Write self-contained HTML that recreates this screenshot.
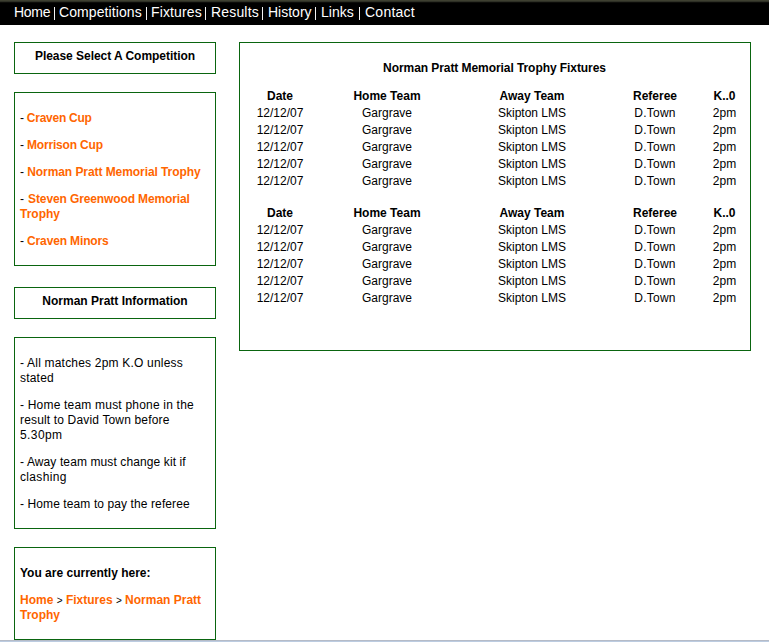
<!DOCTYPE html>
<html><head><meta charset="utf-8"><title>Norman Pratt Memorial Trophy Fixtures</title>
<style>
html,body{margin:0;padding:0}
body{width:769px;height:642px;overflow:hidden;background:#fff;position:relative;font-family:"Liberation Sans",sans-serif;color:#000}
#nav{position:absolute;left:0;top:0;width:769px;height:25px;background:#000}
#navtop{position:absolute;left:0;top:0;width:769px;height:3px;background:linear-gradient(#3e4031 0,#3e4031 1px,#2e3026 1px,#2e3026 2px,#0c0c09 2px,#0c0c09 3px)}
.pp{position:absolute;top:7px;width:1px;height:13px;background:#f4f4f4}
.n{position:absolute;top:4px;font-size:14px;line-height:16px;color:#fff;white-space:pre}
.box{position:absolute;left:14px;width:200px;border:1px solid #0a650f;background:#fff}
.hd{font-weight:bold;font-size:12px;text-align:center;position:absolute;left:0;right:0;line-height:15px}
.t{position:absolute;left:20px;font-size:12px;line-height:15px;white-space:pre}
.o{color:#ff6600;font-weight:bold}
#content{position:absolute;left:239px;top:42px;width:510px;height:307px;border:1px solid #0a650f}
.c{position:absolute;width:100px;text-align:center;font-size:12px;line-height:15px;white-space:pre}
.b{font-weight:bold}
.gt{font-size:10px}
.ls{letter-spacing:0.2px}
#bottom{position:absolute;left:0;top:640px;width:769px;height:2px;background:linear-gradient(#b5bbc7 0,#b5bbc7 1px,#bccce1 1px,#bccce1 2px)}
</style></head><body>
<div id="nav"><div id="navtop"></div>
<span class="n" style="left:14px;letter-spacing:-0.3px">Home</span>
<span class="pp" style="left:54px"></span>
<span class="n" style="left:59px;letter-spacing:0.09px">Competitions</span>
<span class="pp" style="left:146px"></span>
<span class="n" style="left:151px;letter-spacing:0.14px">Fixtures</span>
<span class="pp" style="left:205px"></span>
<span class="n" style="left:211px;letter-spacing:0.17px">Results</span>
<span class="pp" style="left:262px"></span>
<span class="n" style="left:268px">History</span>
<span class="pp" style="left:315px"></span>
<span class="n" style="left:321px">Links</span>
<span class="pp" style="left:359px"></span>
<span class="n" style="left:365px;letter-spacing:0.25px">Contact</span>
</div>

<div class="box" style="top:42px;height:30px"></div>
<div class="hd" style="position:absolute;left:14px;width:202px;top:49px;letter-spacing:-0.04px">Please Select A Competition</div>

<div class="box" style="top:92px;height:172px"></div>
<div class="t" style="top:111px;letter-spacing:-0.25px">- <span class="o">Craven Cup</span></div>
<div class="t" style="top:138px;letter-spacing:-0.18px">- <span class="o">Morrison Cup</span></div>
<div class="t" style="top:165px;letter-spacing:-0.07px">- <span class="o">Norman Pratt Memorial Trophy</span></div>
<div class="t" style="top:192px;letter-spacing:-0.12px">- <span class="o" style="margin-left:1px">Steven Greenwood Memorial</span></div>
<div class="t" style="top:207px"><span class="o">Trophy</span></div>
<div class="t" style="top:234px;letter-spacing:-0.14px">- <span class="o">Craven Minors</span></div>

<div class="box" style="top:287px;height:30px"></div>
<div class="hd" style="position:absolute;left:14px;width:202px;top:294px">Norman Pratt Information</div>

<div class="box" style="top:337px;height:190px"></div>
<div class="t ls" style="top:356px">- All matches 2pm K.O unless</div>
<div class="t ls" style="top:371px">stated</div>
<div class="t ls" style="top:398px">- Home team must phone in the</div>
<div class="t" style="top:413px;letter-spacing:0.16px">result to David Town before</div>
<div class="t" style="top:428px;letter-spacing:0.4px">5.30pm</div>
<div class="t" style="top:455px;letter-spacing:0.11px">- Away team must change kit if</div>
<div class="t" style="top:470px;letter-spacing:0.34px">clashing</div>
<div class="t" style="top:497px;letter-spacing:0.1px">- Home team to pay the referee</div>

<div class="box" style="top:547px;height:91px"></div>
<div class="t" style="top:566px;font-weight:bold">You are currently here:</div>
<div class="t" style="top:593px"><span class="o">Home</span> <span class="gt">&gt;</span> <span class="o">Fixtures</span> <span class="gt">&gt;</span> <span class="o">Norman Pratt</span></div>
<div class="t" style="top:608px"><span class="o">Trophy</span></div>

<div id="content"></div>
<div class="c b" style="left:344.5px;top:61px;width:300px;letter-spacing:-0.07px">Norman Pratt Memorial Trophy Fixtures</div>
<div class="c b" style="left:230px;top:89px">Date</div>
<div class="c b" style="left:337px;top:89px">Home Team</div>
<div class="c b" style="left:482px;top:89px">Away Team</div>
<div class="c b" style="left:605px;top:89px">Referee</div>
<div class="c b" style="left:674.5px;top:89px">K..0</div>
<div class="c" style="left:230px;top:106px">12/12/07</div>
<div class="c" style="left:337px;top:106px">Gargrave</div>
<div class="c" style="left:482px;top:106px">Skipton LMS</div>
<div class="c" style="left:605px;top:106px;letter-spacing:0.25px">D.Town</div>
<div class="c" style="left:674.5px;top:106px">2pm</div>
<div class="c" style="left:230px;top:123px">12/12/07</div>
<div class="c" style="left:337px;top:123px">Gargrave</div>
<div class="c" style="left:482px;top:123px">Skipton LMS</div>
<div class="c" style="left:605px;top:123px;letter-spacing:0.25px">D.Town</div>
<div class="c" style="left:674.5px;top:123px">2pm</div>
<div class="c" style="left:230px;top:140px">12/12/07</div>
<div class="c" style="left:337px;top:140px">Gargrave</div>
<div class="c" style="left:482px;top:140px">Skipton LMS</div>
<div class="c" style="left:605px;top:140px;letter-spacing:0.25px">D.Town</div>
<div class="c" style="left:674.5px;top:140px">2pm</div>
<div class="c" style="left:230px;top:157px">12/12/07</div>
<div class="c" style="left:337px;top:157px">Gargrave</div>
<div class="c" style="left:482px;top:157px">Skipton LMS</div>
<div class="c" style="left:605px;top:157px;letter-spacing:0.25px">D.Town</div>
<div class="c" style="left:674.5px;top:157px">2pm</div>
<div class="c" style="left:230px;top:174px">12/12/07</div>
<div class="c" style="left:337px;top:174px">Gargrave</div>
<div class="c" style="left:482px;top:174px">Skipton LMS</div>
<div class="c" style="left:605px;top:174px;letter-spacing:0.25px">D.Town</div>
<div class="c" style="left:674.5px;top:174px">2pm</div>
<div class="c b" style="left:230px;top:206px">Date</div>
<div class="c b" style="left:337px;top:206px">Home Team</div>
<div class="c b" style="left:482px;top:206px">Away Team</div>
<div class="c b" style="left:605px;top:206px">Referee</div>
<div class="c b" style="left:674.5px;top:206px">K..0</div>
<div class="c" style="left:230px;top:223px">12/12/07</div>
<div class="c" style="left:337px;top:223px">Gargrave</div>
<div class="c" style="left:482px;top:223px">Skipton LMS</div>
<div class="c" style="left:605px;top:223px;letter-spacing:0.25px">D.Town</div>
<div class="c" style="left:674.5px;top:223px">2pm</div>
<div class="c" style="left:230px;top:240px">12/12/07</div>
<div class="c" style="left:337px;top:240px">Gargrave</div>
<div class="c" style="left:482px;top:240px">Skipton LMS</div>
<div class="c" style="left:605px;top:240px;letter-spacing:0.25px">D.Town</div>
<div class="c" style="left:674.5px;top:240px">2pm</div>
<div class="c" style="left:230px;top:257px">12/12/07</div>
<div class="c" style="left:337px;top:257px">Gargrave</div>
<div class="c" style="left:482px;top:257px">Skipton LMS</div>
<div class="c" style="left:605px;top:257px;letter-spacing:0.25px">D.Town</div>
<div class="c" style="left:674.5px;top:257px">2pm</div>
<div class="c" style="left:230px;top:274px">12/12/07</div>
<div class="c" style="left:337px;top:274px">Gargrave</div>
<div class="c" style="left:482px;top:274px">Skipton LMS</div>
<div class="c" style="left:605px;top:274px;letter-spacing:0.25px">D.Town</div>
<div class="c" style="left:674.5px;top:274px">2pm</div>
<div class="c" style="left:230px;top:291px">12/12/07</div>
<div class="c" style="left:337px;top:291px">Gargrave</div>
<div class="c" style="left:482px;top:291px">Skipton LMS</div>
<div class="c" style="left:605px;top:291px;letter-spacing:0.25px">D.Town</div>
<div class="c" style="left:674.5px;top:291px">2pm</div>

<div id="bottom"></div>
</body></html>
